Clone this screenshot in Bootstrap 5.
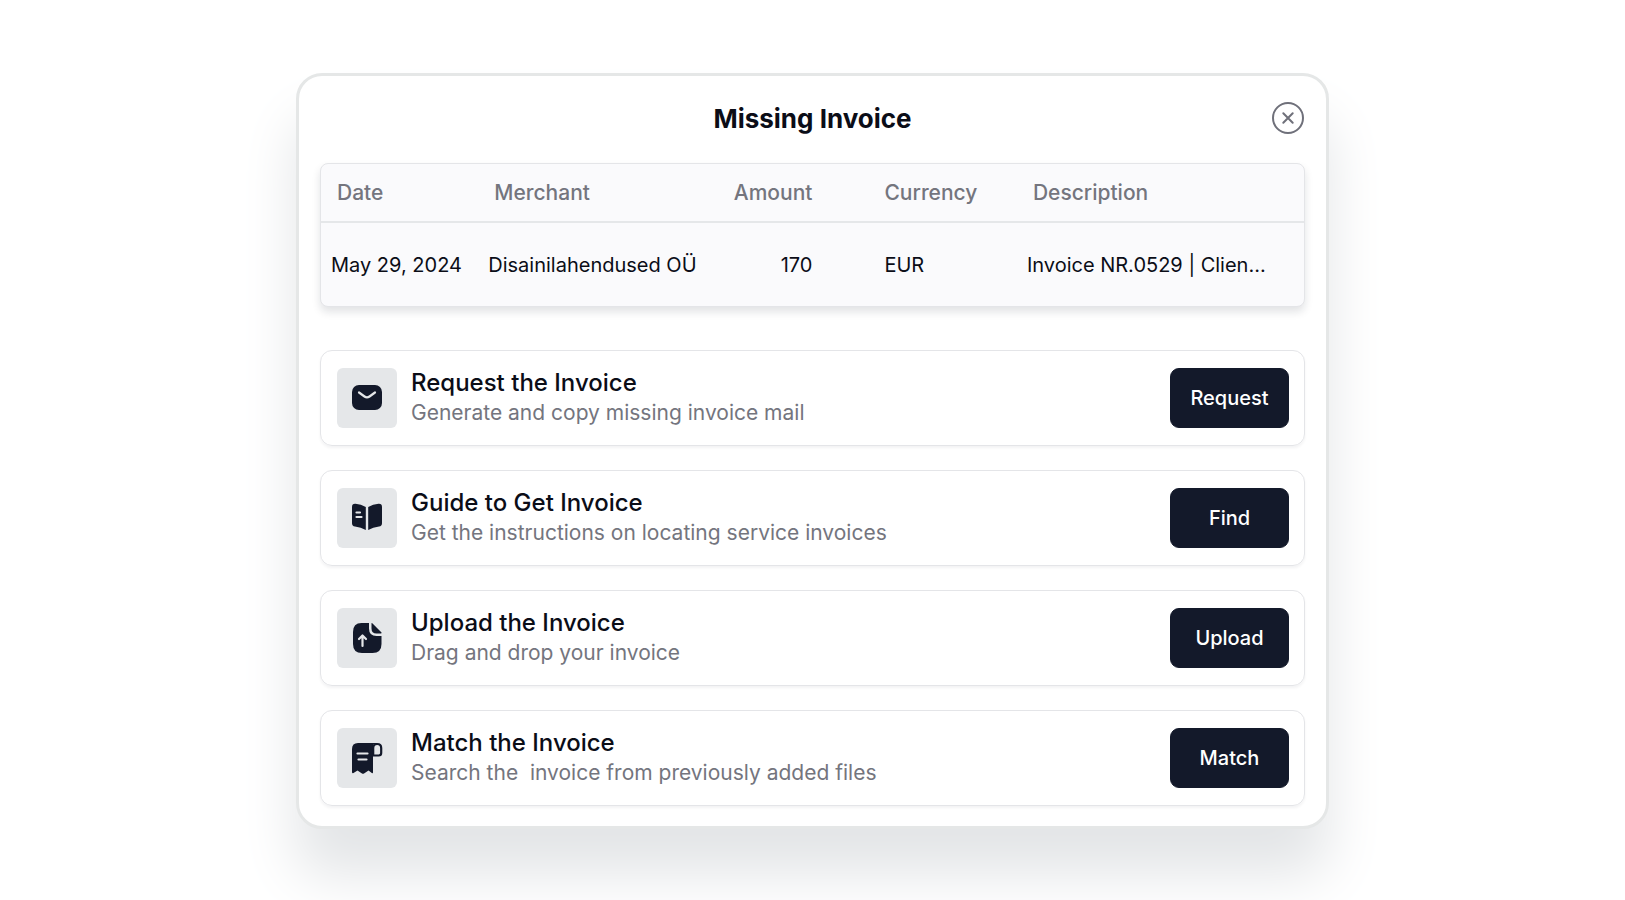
<!DOCTYPE html>
<html lang="en">
<head>
<meta charset="utf-8">
<meta name="viewport" content="width=device-width, initial-scale=1">
<title>Missing Invoice</title>
<link href="https://cdn.jsdelivr.net/npm/bootstrap@5.3.0/dist/css/bootstrap.min.css" rel="stylesheet">
<style>
  body { font-family: Inter, "Liberation Sans", sans-serif; font-size: 20px; line-height: 30px; color: #0b0d17; background: #fff; }
  .page { padding: 73px 16px 72px; }
  .invoice-panel { max-width: 1033px; padding: 0 21px 20px; background: #fff; border: 3px solid #e5e7e7; border-radius: 26px; box-shadow: 0 46px 56px #e3e5e7; }
  .panel-head { height: 87px; padding-bottom: 1px; }
  .panel-title { font-size: 26px; font-weight: 700; line-height: 32px; }
  .close-round { right: 0; width: 34px; height: 34px; color: #6f707a; }
  .summary { background: #fafafc; border: 1px solid #e4e5e8; border-radius: 8px; box-shadow: 0 5px 8px rgba(17, 24, 39, .12); margin-bottom: 43px; }
  .summary table { table-layout: fixed; }
  .summary th { height: 58px; padding: 0 16px; font-size: 21px; font-weight: 500; color: #74757e; border-bottom: 2px solid #e5e7e9; }
  .summary td { height: 84px; padding: 0 10px; white-space: nowrap; }
  .summary .col-amount { padding-left: 0; padding-right: 59px; text-align: right; }
  .summary .col-currency { padding-left: 13px; }
  .summary th:last-child { padding-left: 14px; }
  .summary td:last-child { padding-left: 8px; }
  .options { gap: 24px; }
  .option { min-height: 96px; padding: 0 15px 0 16px; gap: 14px; border: 1px solid #e4e5e8; border-radius: 12px; box-shadow: 0 2px 3px rgba(17, 24, 39, .05); }
  .option-icon { width: 60px; height: 60px; border-radius: 6px; background: #e5e7e9; color: #13192a; }
  .option-title { font-size: 24px; font-weight: 500; line-height: 30px; }
  .option-text { font-size: 21px; color: #74757e; }
  .btn-ink { --bs-btn-color: #fff; --bs-btn-bg: #13192a; --bs-btn-border-color: #13192a; --bs-btn-hover-color: #fff; --bs-btn-hover-bg: #262e44; --bs-btn-hover-border-color: #262e44; width: 119px; height: 60px; padding: 0; border-radius: 9px; font-size: 20px; font-weight: 500; }
</style>
</head>
<body>
<main class="page">
  <section class="invoice-panel mx-auto" aria-labelledby="panel-title">
    <header class="panel-head position-relative d-flex align-items-center justify-content-center">
      <h1 class="panel-title m-0" id="panel-title">Missing Invoice</h1>
      <button type="button" class="close-round btn p-0 border-0 position-absolute d-flex" aria-label="Close">
        <svg width="34" height="34" viewBox="0 0 34 34" fill="none" stroke="currentColor" stroke-width="2" stroke-linecap="round"><circle cx="17" cy="16" r="15"/><path d="M12.300 11.300l9.400 9.400M21.700 11.300l-9.400 9.400"/></svg>
      </button>
    </header>

    <div class="summary">
      <table class="w-100">
        <colgroup><col style="width:16%"><col style="width:25%"><col style="width:15%"><col style="width:15%"><col style="width:29%"></colgroup>
        <thead>
          <tr><th scope="col">Date</th><th scope="col">Merchant</th><th scope="col" class="col-amount">Amount</th><th scope="col" class="col-currency">Currency</th><th scope="col">Description</th></tr>
        </thead>
        <tbody>
          <tr><td>May 29, 2024</td><td>Disainilahendused OÜ</td><td class="col-amount">170</td><td class="col-currency">EUR</td><td>Invoice NR.0529 | Clien...</td></tr>
        </tbody>
      </table>
    </div>

    <div class="options d-flex flex-column">
      <article class="option d-flex align-items-center">
        <div class="option-icon flex-shrink-0">
          <svg class="d-block" width="60" height="60" viewBox="0 0 60 60" aria-hidden="true"><rect x="15" y="17" width="30" height="25" rx="7" fill="currentColor"/><path d="M22 24.500l5.500 4q2.500 1.800 5 0l5.500-4" fill="none" stroke="#e5e7e9" stroke-width="2.200" stroke-linecap="round"/></svg>
        </div>
        <div class="flex-grow-1">
          <h2 class="option-title m-0">Request the Invoice</h2>
          <p class="option-text m-0">Generate and copy missing invoice mail</p>
        </div>
        <button type="button" class="btn btn-ink">Request</button>
      </article>

      <article class="option d-flex align-items-center">
        <div class="option-icon flex-shrink-0">
          <svg class="d-block" width="60" height="60" viewBox="0 0 60 60" aria-hidden="true"><path fill="currentColor" d="M15 19q0-3.500 3.500-3.200 5.500.5 10.300 3.200V42q-4.800-2.700-10.800-3.400Q15 38.200 15 35.300zM45 19q0-3.500-3.500-3.200-5.500.5-10.300 3.200V42q4.800-2.700 10.800-3.400 3-.4 3-3.300z"/><path d="M19.500 24.500h3.500M19.500 29h5" fill="none" stroke="#e5e7e9" stroke-width="2.200" stroke-linecap="round"/></svg>
        </div>
        <div class="flex-grow-1">
          <h2 class="option-title m-0">Guide to Get Invoice</h2>
          <p class="option-text m-0">Get the instructions on locating service invoices</p>
        </div>
        <button type="button" class="btn btn-ink">Find</button>
      </article>

      <article class="option d-flex align-items-center">
        <div class="option-icon flex-shrink-0">
          <svg class="d-block" width="60" height="60" viewBox="0 0 60 60" aria-hidden="true"><path fill="currentColor" d="M24.500 15H32v5.500q0 7.500 7.500 7.500H44.500v8q0 9-9 9H25q-9 0-9-9V24q0-9 8.500-9zM34.500 15.300q.2-.5.800 0l9.200 9.200q.5.700-.5 1H39.500q-5 0-5-5z"/><path d="M25.500 38V28M22 31l3.500-3.500L29 31" fill="none" stroke="#e5e7e9" stroke-width="2.200" stroke-linecap="round" stroke-linejoin="round"/></svg>
        </div>
        <div class="flex-grow-1">
          <h2 class="option-title m-0">Upload the Invoice</h2>
          <p class="option-text m-0">Drag and drop your invoice</p>
        </div>
        <button type="button" class="btn btn-ink">Upload</button>
      </article>

      <article class="option d-flex align-items-center">
        <div class="option-icon flex-shrink-0">
          <svg class="d-block" width="60" height="60" viewBox="0 0 60 60" aria-hidden="true"><path fill="currentColor" d="M21 15h19v1.500H36V44.500q-.3 1-1.200.4L31.500 42.500l-4.500 3q-1 .6-2 0l-4.500-3-4 2.600Q15 45.500 15 44V21q0-6 6-6z"/><path d="M36.200 27.500V20q0-4 4-4t4 4v5q0 2.500-2.500 2.500z" fill="none" stroke="currentColor" stroke-width="2.200"/><path d="M20.500 25.500h10M21.500 31.500h8" fill="none" stroke="#e5e7e9" stroke-width="2.200" stroke-linecap="round"/></svg>
        </div>
        <div class="flex-grow-1">
          <h2 class="option-title m-0">Match the Invoice</h2>
          <p class="option-text m-0">Search the&nbsp; invoice from previously added files</p>
        </div>
        <button type="button" class="btn btn-ink">Match</button>
      </article>
    </div>
  </section>
</main>
<script src="https://cdn.jsdelivr.net/npm/bootstrap@5.3.0/dist/js/bootstrap.bundle.min.js"></script>
</body>
</html>
